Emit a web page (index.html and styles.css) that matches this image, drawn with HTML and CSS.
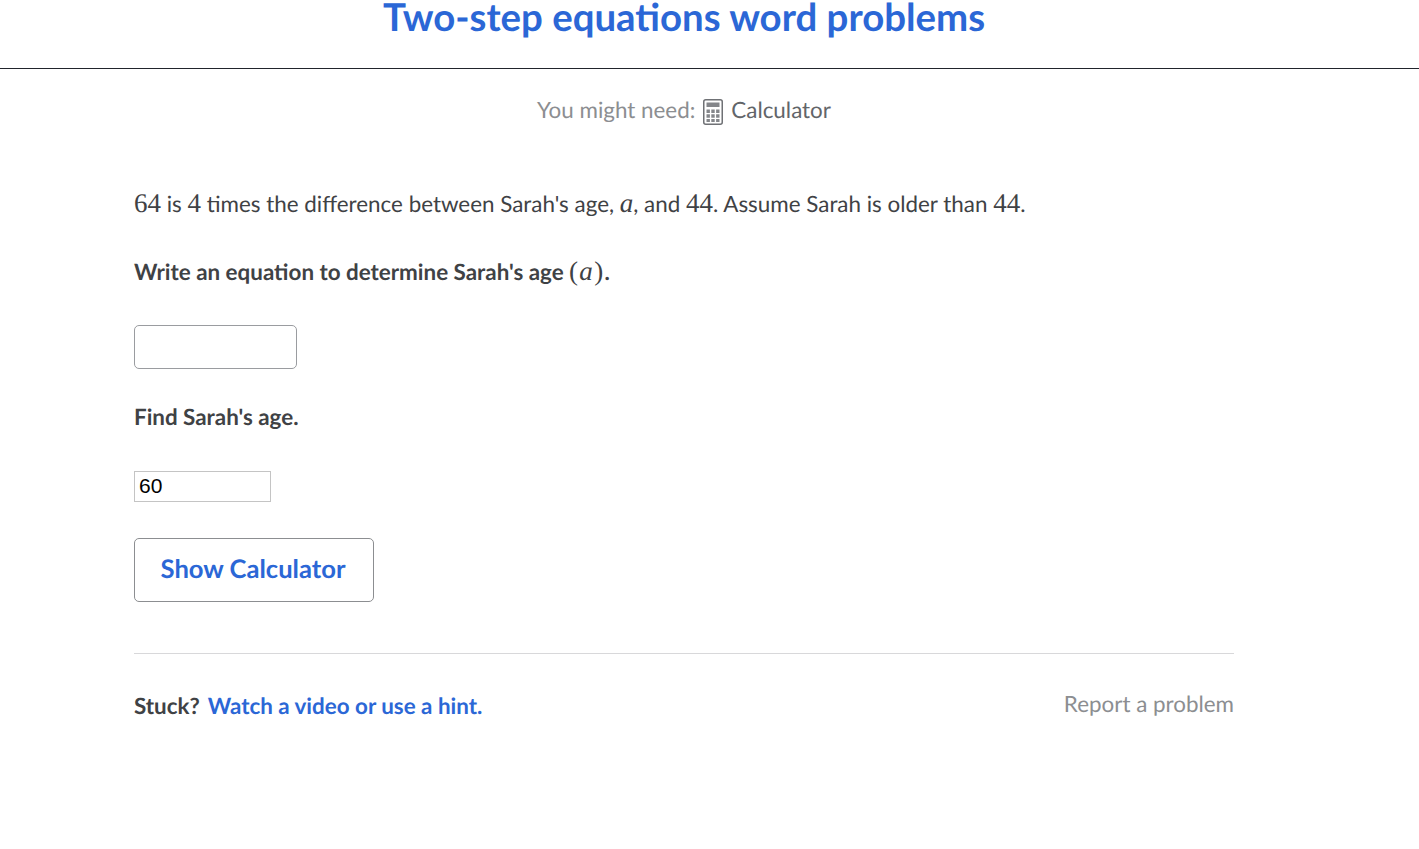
FILE: index.html
```html
<!DOCTYPE html>
<html lang="en">
<head>
    <meta charset="UTF-8">
    <title>Two-step equations word problems</title>
    <link rel="stylesheet" href="styles.css">
</head>
<body>
    <div class="header">
        <h1>Two-step equations word problems</h1>
    </div>

    <div class="content">
        <p class="might-need">
            You might need:
            <svg class="calc-icon" width="20" height="26" viewBox="0 0 20 26">
                <rect x="0.75" y="0.75" width="18.5" height="24.5" rx="2" fill="none" stroke="#6f7175" stroke-width="1.5"/>
                <rect x="3.5" y="3.5" width="13" height="4.5" fill="#84868a"/>
                <path d="M3.5 10.5h3.4v3.4H3.5zM8.3 10.5h3.4v3.4H8.3zM13.1 10.5h3.4v3.4h-3.4zM3.5 15.3h3.4v3.4H3.5zM8.3 15.3h3.4v3.4H8.3zM13.1 15.3h3.4v3.4h-3.4zM3.5 20.1h3.4v3H3.5zM8.3 20.1h3.4v3H8.3zM13.1 20.1h3.4v3h-3.4z" fill="#84868a"/>
            </svg>
            <span class="calc-label">Calculator</span>
        </p>

        <p class="problem">
            <span class="math">64</span> is <span class="math">4</span> times the difference between Sarah's age, <span class="math var">a</span>, and <span class="math">44</span>. Assume Sarah is older than <span class="math">44</span>.
        </p>

        <p class="question q-first">Write an equation to determine Sarah's age <span class="math paren">(<span class="var">a</span>)</span>.</p>
        <input class="eq-input" type="text">

        <p class="question q-second">Find Sarah's age.</p>
        <input class="age-input" type="text" value="60">

        <button class="calc-btn">Show Calculator</button>

        <div class="footer">
            <div class="stuck">
                <span class="stuck-label">Stuck?</span>
                <a href="#" class="hint-link">Watch a video or use a hint.</a>
            </div>
            <a href="#" class="report-link">Report a problem</a>
        </div>
    </div>
</body>
</html>
```

FILE: styles.css
```css
* {
    margin: 0;
    padding: 0;
    box-sizing: border-box;
}

body {
    font-family: Lato, "Noto Sans", sans-serif;
    background-color: #fff;
    color: #3f4245;
    font-size: 22.4px;
    text-rendering: geometricPrecision;
}

.header {
    border-bottom: 1px solid #21242c;
    height: 69px;
    padding-left: 134px;
    padding-right: 185px;
}

h1 {
    font-size: 38.4px;
    line-height: 34px;
    font-weight: 700;
    color: #2b67d6;
    text-align: center;
}

.content {
    width: 1100px;
    margin-left: 134px;
}

.might-need {
    display: flex;
    justify-content: center;
    align-items: center;
    gap: 9px;
    height: 26px;
    margin-top: 27px;
    color: #8c8e91;
}

.calc-label {
    color: #626569;
    margin-left: -1px;
}

.calc-icon {
    margin-top: 6px;
    margin-left: -1px;
}

.problem {
    margin-top: 66px;
    line-height: 30px;
}

.math {
    font-family: "Liberation Serif", serif;
    font-size: 27px;
}

.var {
    font-style: italic;
}

.question {
    font-weight: 700;
    line-height: 30px;
}

.q-first {
    margin-top: 37px;
}

.q-second {
    margin-top: 33px;
}

.paren {
    font-weight: 400;
    letter-spacing: 1.3px;
}

.eq-input {
    display: block;
    width: 163px;
    height: 44px;
    margin-top: 38px;
    border: 1px solid #9a9ca0;
    border-radius: 5px;
    background: #fff;
}

.age-input {
    display: block;
    width: 137px;
    height: 31px;
    margin-top: 39px;
    padding: 0 4px 2px;
    border: 1px solid #c4c4c4;
    font-family: "Liberation Sans", sans-serif;
    font-size: 21px;
    color: #000;
}

.calc-btn {
    display: block;
    width: 240px;
    height: 64px;
    margin-top: 36px;
    padding-bottom: 3px;
    padding-right: 2px;
    background: #fff;
    border: 1px solid #8c8e91;
    border-radius: 5px;
    font-family: Lato, sans-serif;
    font-size: 25.6px;
    font-weight: 700;
    color: #2b67d6;
    text-rendering: geometricPrecision;
}

.footer {
    display: flex;
    justify-content: space-between;
    align-items: center;
    margin-top: 51px;
    padding-top: 34px;
    border-top: 1px solid #d8d8da;
}

.stuck {
    display: flex;
    gap: 8px;
    font-weight: 700;
    margin-top: 4px;
}

.hint-link {
    color: #2b67d6;
    text-decoration: none;
}

.report-link {
    color: #8c8e91;
    text-decoration: none;
}
```
